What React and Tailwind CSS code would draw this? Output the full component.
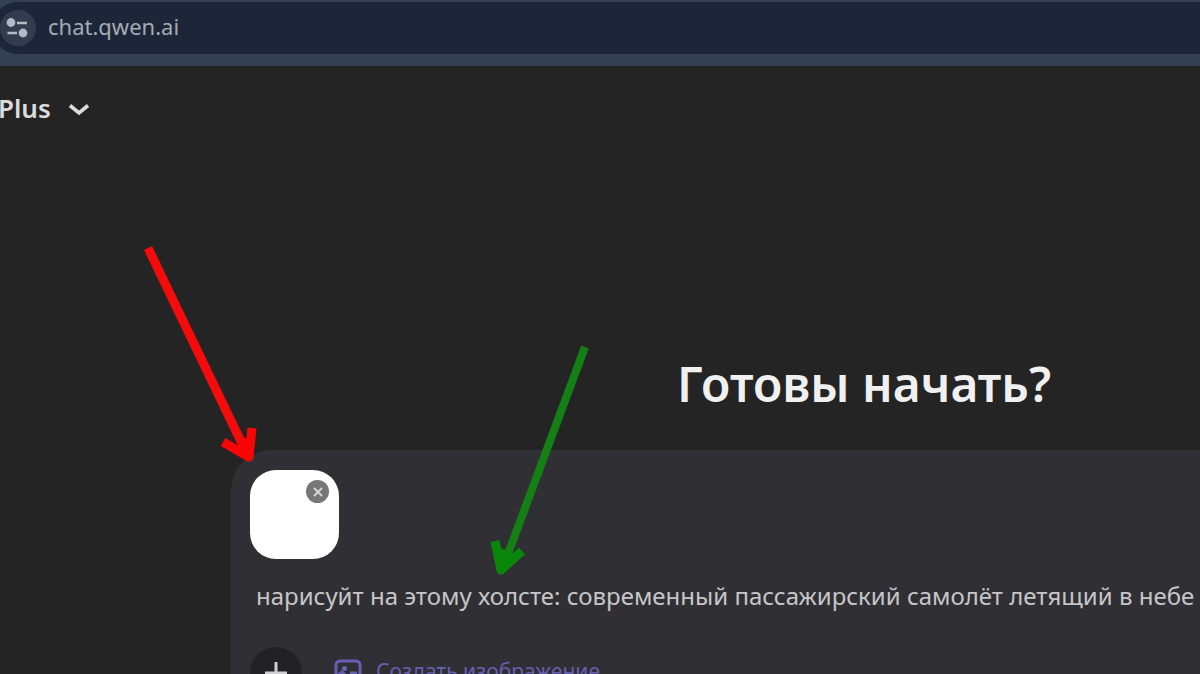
function AddressBar() {
  return (
    <header className="h-[66px] shrink-0 overflow-hidden bg-[#343f52] pt-0.5">
      <div className="-ml-2 flex h-[52px] items-center gap-3 rounded-l-full bg-[#1d2638] pl-2">
        <button
          type="button"
          aria-label="Сведения о сайте"
          className="flex size-9 shrink-0 items-center justify-center rounded-full bg-[#323c4e] text-[#b4bac5]"
        >
          <svg viewBox="0 0 24 24" className="size-6" fill="none" stroke="currentColor" strokeWidth="2.6">
            <circle cx="5" cy="6.5" r="4.4" fill="currentColor" stroke="none" />
            <path d="M11 7h10M1.500 17h9.500" />
            <circle cx="17" cy="17" r="4.4" fill="currentColor" stroke="none" />
          </svg>
        </button>
        <input
          type="text"
          aria-label="Адрес"
          defaultValue="chat.qwen.ai"
          className="min-w-0 flex-1 bg-transparent pb-1 text-[22px] text-[#a5abb5] outline-none"
        />
      </div>
    </header>
  );
}

function ModelPicker() {
  return (
    <button type="button" className="-ml-0.5 flex items-center gap-4 text-[26px] leading-9 font-semibold text-[#dcdcdc]">
      Plus
      <svg viewBox="0 0 24 16" className="h-4 w-6" fill="none" stroke="currentColor" strokeWidth="3.6">
        <path d="M3 5.500l9 7.500L21 5.500" />
      </svg>
    </button>
  );
}

function Attachment() {
  return (
    <div className="flex size-[89px] justify-end rounded-[26px] bg-white p-2.5">
      <button
        type="button"
        aria-label="Удалить вложение"
        className="flex size-[23px] items-center justify-center rounded-full bg-[#77777a] text-[#d8d8d8]"
      >
        <svg viewBox="0 0 12 12" className="size-3" fill="none" stroke="currentColor" strokeWidth="1.8">
          <path d="M2 2l8 8M10 2l-8 8" />
        </svg>
      </button>
    </div>
  );
}

function Composer() {
  return (
    <form className="flex flex-1 flex-col rounded-tl-[40px] bg-[#302f34] pt-5 pl-[19px]">
      <Attachment />
      <input
        type="text"
        aria-label="Сообщение"
        defaultValue="нарисуйт на этому холсте: современный пассажирский самолёт летящий в небе"
        className="mt-[18px] ml-1.5 h-9 bg-transparent text-2xl text-[#c6c6c8] outline-none"
      />
      <div className="mt-[34px] flex items-start gap-8">
        <button
          type="button"
          aria-label="Добавить"
          className="flex size-[52px] items-center justify-center rounded-full bg-[#222224] text-[#d0d0d2]"
        >
          <svg viewBox="0 0 24 24" className="size-6" fill="none" stroke="currentColor" strokeWidth="3">
            <path d="M12 1v22M1 12h22" />
          </svg>
        </button>
        <button type="button" className="mt-2 flex items-center gap-3.5 text-[21px] leading-7 text-[#665fb4]">
          <svg viewBox="0 0 28 28" className="mt-1 size-7" fill="none" stroke="currentColor" strokeWidth="3">
            <rect x="2" y="2" width="24" height="24" rx="4" />
            <circle cx="10.5" cy="9.5" r="2.6" fill="currentColor" stroke="none" />
            <path d="M3 17l5-4 8 8M16 14h7" />
          </svg>
          Создать изображение
        </button>
      </div>
    </form>
  );
}

function Annotations() {
  return (
    <svg
      viewBox="0 0 1200 674"
      className="pointer-events-none absolute top-0 left-0 h-[674px] w-[1200px]"
      fill="none"
      strokeLinejoin="round"
      aria-hidden="true"
    >
      <path d="M148 248L246 452" stroke="#f40b0b" strokeWidth="9" />
      <path d="M223 442L249 457L252 428" stroke="#fa0505" strokeWidth="9" />
      <path d="M236 440L249 457L252 437z" fill="#fa0505" />
      <path d="M585 347L502 570" stroke="#147f14" strokeWidth="8" />
      <path d="M495 541L501 570L522 551" stroke="#0a870a" strokeWidth="9" />
      <path d="M498 547L501 570L517 555z" fill="#0a870a" />
    </svg>
  );
}

export default function App() {
  return (
    <div className="relative flex h-screen flex-col overflow-hidden bg-[#242425] font-['Noto_Sans','Open_Sans',sans-serif]">
      <AddressBar />
      <nav className="pt-6">
        <ModelPicker />
      </nav>
      <main className="mt-56 ml-[231px] flex flex-1 flex-col">
        <h1 className="pb-8 pl-[297px] text-center text-5xl leading-[68px] font-semibold whitespace-nowrap text-[#f0f0f0]">
          Готовы начать?
        </h1>
        <Composer />
      </main>
      <Annotations />
    </div>
  );
}
